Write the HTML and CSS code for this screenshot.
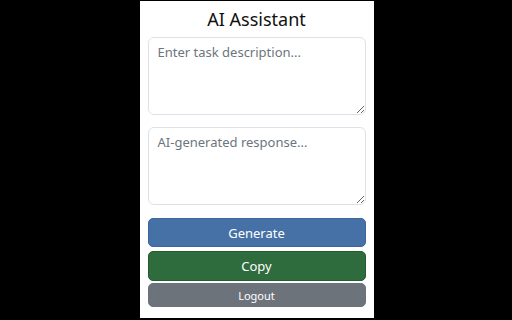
FILE: index.html
```html
<!DOCTYPE html>
<html lang="en">
<head>
    <meta charset="UTF-8">
    <meta name="viewport" content="width=device-width, initial-scale=1.0">
    <title>AI Assistant</title>
    <link rel="stylesheet" href="styles.css">
</head>
<body>

    <div class="container">
        <h1>AI Assistant</h1>
        <textarea id="task" placeholder="Enter task description..."></textarea>
        <textarea id="response" placeholder="AI-generated response..."></textarea>
        <button class="btn btn-generate">Generate</button>
        <button class="btn btn-copy">Copy</button>
        <button class="btn btn-logout">Logout</button>
    </div>

</body>
</html>
```

FILE: styles.css
```css
body {
    font-family: "Noto Sans", "Open Sans", sans-serif;
    background-color: #000;
    margin: 0;
    height: 320px;
    display: flex;
    justify-content: center;
}
.container {
    background-color: #fff;
    width: 234px;
    height: 317px;
    margin-top: 1px;
    margin-left: 1px;
    padding: 0 8px;
    box-sizing: border-box;
    display: flex;
    flex-direction: column;
}
h1 {
    margin: 7px 0 6px;
    font-size: 18px;
    font-weight: 400;
    line-height: 23px;
    text-align: center;
    color: #111;
}
textarea {
    height: 78px;
    margin-bottom: 12px;
    padding: 4px 9px;
    font-family: inherit;
    font-size: 13px;
    line-height: 20px;
    border: 1px solid #dee2e6;
    border-radius: 6px;
    box-sizing: border-box;
    resize: vertical;
}
textarea::placeholder {
    color: #6c757d;
}
#response {
    margin-bottom: 13px;
}
.btn {
    width: 100%;
    color: #fff;
    font-family: inherit;
    font-size: 13px;
    border-radius: 5px;
    padding: 0;
    cursor: pointer;
}
.btn-generate {
    height: 29px;
    background-color: #4571a6;
    border: 1px solid #3d66a0;
}
.btn-copy {
    height: 30px;
    margin-top: 4px;
    background-color: #2f6c3d;
    border: 1px solid #235c31;
}
.btn-logout {
    height: 24px;
    margin-top: 2px;
    font-size: 11px;
    background-color: #6c737b;
    border: 1px solid #6c737b;
}
```
